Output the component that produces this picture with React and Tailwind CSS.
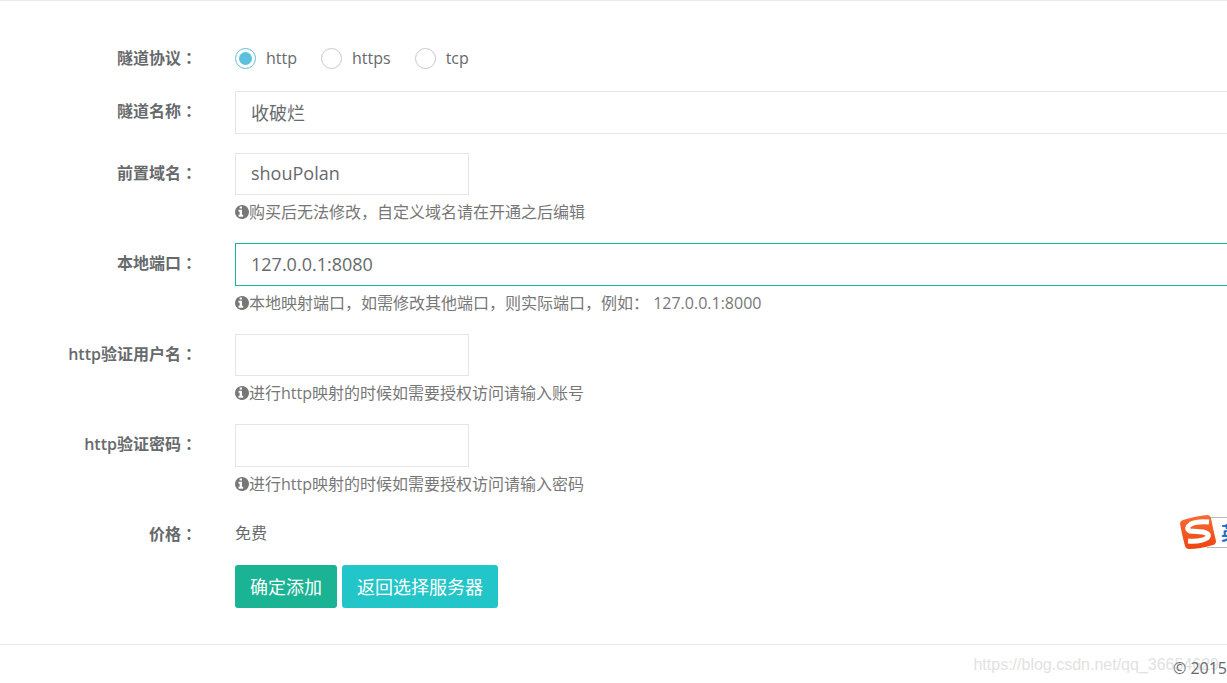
import React from "react";

function InfoIcon() {
  return (
    <svg className="size-3.5 shrink-0" viewBox="128 128 1536 1536" fill="currentColor" aria-hidden="true">
      <path d="M1024 1376v-160q0-14-9-23t-23-9h-96v-512q0-14-9-23t-23-9h-320q-14 0-23 9t-9 23v160q0 14 9 23t23 9h96v320h-96q-14 0-23 9t-9 23v160q0 14 9 23t23 9h448q14 0 23-9t9-23zM896 480v-160q0-14-9-23t-23-9h-192q-14 0-23 9t-9 23v160q0 14 9 23t23 9h192q14 0 23-9t9-23zM1664 896q0 209-103 385.5t-279.5 279.5-385.5 103-385.5-103-279.5-279.5-103-385.5 103-385.5 279.5-279.5 385.5-103 385.5 103 279.5 279.5 103 385.5z" />
    </svg>
  );
}

function Row({ label, htmlFor, children, className = "" }) {
  const Label = htmlFor ? "label" : "span";
  return (
    <div className={`flex ${className}`}>
      <div className="w-[235px] shrink-0 pr-[38px] pt-[7px] text-right font-semibold leading-6">
        {label && (
          <Label htmlFor={htmlFor}>
            {label}
            <span className="font-['Noto_Sans_CJK_JP',sans-serif]">：</span>
          </Label>
        )}
      </div>
      <div className="min-w-0 flex-1">{children}</div>
    </div>
  );
}

function Hint({ children }) {
  return (
    <p className="mt-[5px] flex items-center leading-6 text-[#777777]">
      <InfoIcon />
      {children}
    </p>
  );
}

function TextInput({ className = "", ...props }) {
  return (
    <input
      className={`block border bg-white px-[15px] pb-0.5 text-lg outline-none ${className}`}
      {...props}
    />
  );
}

function Radio({ label, ...props }) {
  return (
    <label className="flex items-center gap-2.5">
      <input
        type="radio"
        name="protocol"
        className="size-[21px] appearance-none rounded-full border border-[#c8c8c8] bg-white bg-clip-content p-[3px] checked:border-[#5bc0de] checked:bg-[#5bc0de]"
        {...props}
      />
      {label}
    </label>
  );
}

function SogouBar() {
  return (
    <aside className="absolute right-0 top-[517px] flex items-center" aria-label="输入法">
      <div className="flex h-[31px] w-5 items-center justify-end overflow-hidden border-y border-[#b5bac5] bg-white">
        <span className="-mr-3 shrink-0 text-lg font-bold text-[#1673d1]">英</span>
      </div>
      <svg className="absolute right-[11px] size-9" viewBox="0 0 36 36" aria-hidden="true">
        <defs>
          <linearGradient id="sogou" x1="0" y1="0" x2="0" y2="1">
            <stop offset="0" stopColor="#fb6a35" />
            <stop offset="1" stopColor="#ee4511" />
          </linearGradient>
        </defs>
        <path
          d="M3 5 Q16 1 27 0 Q30 0 31 3 Q33 14 36 26 Q36 29 33 30 Q20 34 9 34 Q6 34 5 31 Q2 20 0 9 Q0 6 3 5Z"
          fill="url(#sogou)"
        />
        <path
          d="M29 7 Q17 6 11 9 Q5 13 10 16 L23 17 Q31 19 27 23 Q21 27 8 26"
          fill="none"
          stroke="#fff"
          strokeWidth="5"
        />
      </svg>
    </aside>
  );
}

export default function App() {
  return (
    <div className="relative min-h-screen overflow-hidden bg-white font-['Open_Sans','Noto_Sans_CJK_SC',sans-serif] text-base text-[#676a6c]">
      <form
        className="border-y border-[#e7eaec] pb-9 pt-[37px]"
        onSubmit={(e) => e.preventDefault()}
      >
        <Row label="隧道协议">
          <div className="flex h-10 items-center gap-6">
            <Radio label="http" value="http" defaultChecked />
            <Radio label="https" value="https" />
            <Radio label="tcp" value="tcp" />
          </div>
        </Row>
        <Row label="隧道名称" htmlFor="name" className="mt-[13px]">
          <div className="-mr-5">
            <TextInput id="name" defaultValue="收破烂" className="h-[43px] w-full border-[#e5e6e7]" />
          </div>
        </Row>
        <Row label="前置域名" htmlFor="domain" className="mt-[19px]">
          <TextInput id="domain" defaultValue="shouPolan" className="h-[42px] w-[234px] border-[#e5e6e7]" />
          <Hint>购买后无法修改，自定义域名请在开通之后编辑</Hint>
        </Row>
        <Row label="本地端口" htmlFor="port" className="mt-[19px]">
          <div className="-mr-5">
            <TextInput id="port" defaultValue="127.0.0.1:8080" className="h-[43px] w-full border-[#1ab394]" />
          </div>
          <Hint>本地映射端口，如需修改其他端口，则实际端口，例如： 127.0.0.1:8000</Hint>
        </Row>
        <Row label="http验证用户名" htmlFor="user" className="mt-[19px]">
          <TextInput id="user" className="h-[42px] w-[234px] border-[#e5e6e7]" />
          <Hint>进行http映射的时候如需要授权访问请输入账号</Hint>
        </Row>
        <Row label="http验证密码" htmlFor="pass" className="mt-[19px]">
          <TextInput id="pass" type="password" className="h-[43px] w-[234px] border-[#e5e6e7]" />
          <Hint>进行http映射的时候如需要授权访问请输入密码</Hint>
        </Row>
        <Row label="价格" className="mt-[18px]">
          <p className="pt-[7px] leading-6">免费</p>
        </Row>
        <Row className="mt-[19px]">
          <div className="flex gap-[5px] text-lg text-white">
            <button type="submit" className="h-[43px] rounded-[3px] bg-[#1ab394] px-[15px]">
              确定添加
            </button>
            <button type="button" className="h-[43px] rounded-[3px] bg-[#23c6c8] px-[15px]">
              返回选择服务器
            </button>
          </div>
        </Row>
      </form>
      <footer className="relative flex justify-end pt-[11px]">
        <span className="absolute right-2 top-2 font-['Liberation_Sans',sans-serif] leading-6 text-[#e2e2e2]">
          https://blog.csdn.net/qq_36654629
        </span>
        <span className="relative whitespace-nowrap leading-6">© 2015</span>
      </footer>
      <SogouBar />
    </div>
  );
}
